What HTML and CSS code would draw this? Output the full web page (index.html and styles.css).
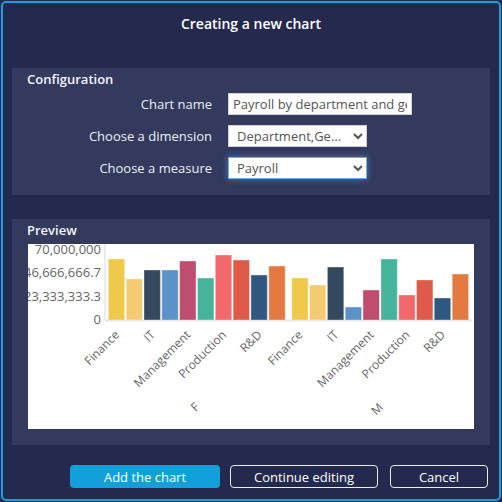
FILE: index.html
```html
<!DOCTYPE html>
<html>
<head>
    <title>Creating a new chart</title>
    <meta charset="utf-8">
    <link rel="stylesheet" href="styles.css">
</head>
<body>
    <div class="dialog">
        <div class="title">Creating a new chart</div>

        <div class="panel config">
            <div class="panel-title">Configuration</div>
            <div class="form">
                <label class="label" for="name">Chart name</label>
                <span class="colon">:</span>
                <input class="field field-wide" type="text" id="name" value="Payroll by department and gender">

                <label class="label" for="dim">Choose a dimension</label>
                <span class="colon">:</span>
                <select class="field" id="dim">
                    <option>Department,Gender</option>
                </select>

                <label class="label" for="measure">Choose a measure</label>
                <span class="colon">:</span>
                <select class="field focused" id="measure">
                    <option>Payroll</option>
                </select>
            </div>
        </div>

        <div class="panel preview">
            <div class="panel-title">Preview</div>
            <div class="chart">
                <svg width="446" height="185">
                    <g class="ylabels">
                        <text x="73" y="9.7">70,000,000</text>
                        <text x="73" y="33.3">46,666,666.7</text>
                        <text x="73" y="57">23,333,333.3</text>
                        <text x="73" y="80">0</text>
                    </g>
                    <line x1="77" y1="0" x2="77" y2="76" stroke="#e6e6e6" stroke-width="1.5"></line>
                    <line x1="77" y1="76.5" x2="444" y2="76.5" stroke="#e6e6e6" stroke-width="2"></line>

                    <g class="bars">
                        <rect x="80.3" y="15" width="16.4" height="61" fill="#efc94c"></rect>
                        <rect x="98.1" y="35" width="16.4" height="41" fill="#f5cb72"></rect>
                        <rect x="116.0" y="26" width="16.4" height="50" fill="#34495e"></rect>
                        <rect x="133.8" y="26" width="16.4" height="50" fill="#5b93c9"></rect>
                        <rect x="151.6" y="17" width="16.4" height="59" fill="#bf4d6d"></rect>
                        <rect x="169.5" y="34" width="16.4" height="42" fill="#46b49d"></rect>
                        <rect x="187.3" y="11" width="16.4" height="65" fill="#f1686d"></rect>
                        <rect x="205.1" y="16" width="16.4" height="60" fill="#e05a48"></rect>
                        <rect x="222.9" y="31" width="16.4" height="45" fill="#30577f"></rect>
                        <rect x="240.8" y="22" width="16.4" height="54" fill="#e47a40"></rect>

                        <rect x="263.7" y="34" width="16.4" height="42" fill="#efc94c"></rect>
                        <rect x="281.5" y="41" width="16.4" height="35" fill="#f5cb72"></rect>
                        <rect x="299.4" y="23" width="16.4" height="53" fill="#34495e"></rect>
                        <rect x="317.2" y="63" width="16.4" height="13" fill="#5b93c9"></rect>
                        <rect x="335.0" y="46" width="16.4" height="30" fill="#bf4d6d"></rect>
                        <rect x="352.9" y="15" width="16.4" height="61" fill="#46b49d"></rect>
                        <rect x="370.7" y="51" width="16.4" height="25" fill="#f1686d"></rect>
                        <rect x="388.5" y="36" width="16.4" height="40" fill="#e05a48"></rect>
                        <rect x="406.3" y="54" width="16.4" height="22" fill="#30577f"></rect>
                        <rect x="424.2" y="30" width="16.4" height="46" fill="#e47a40"></rect>
                    </g>

                    <g class="xlabels">
                        <text x="92" y="91.5" transform="rotate(-45 92 91.5)">Finance</text>
                        <text x="127.7" y="91.5" transform="rotate(-45 127.7 91.5)">IT</text>
                        <text x="163.3" y="91.5" transform="rotate(-45 163.3 91.5)">Management</text>
                        <text x="199" y="91.5" transform="rotate(-45 199 91.5)">Production</text>
                        <text x="234.6" y="91.5" transform="rotate(-45 234.6 91.5)">R&amp;D</text>
                        <text x="275.4" y="91.5" transform="rotate(-45 275.4 91.5)">Finance</text>
                        <text x="311.1" y="91.5" transform="rotate(-45 311.1 91.5)">IT</text>
                        <text x="346.7" y="91.5" transform="rotate(-45 346.7 91.5)">Management</text>
                        <text x="382.4" y="91.5" transform="rotate(-45 382.4 91.5)">Production</text>
                        <text x="418" y="91.5" transform="rotate(-45 418 91.5)">R&amp;D</text>
                    </g>
                    <g class="glabels">
                        <text x="170" y="166" transform="rotate(-45 170 166)">F</text>
                        <text x="352" y="168" transform="rotate(-45 352 168)">M</text>
                    </g>
                </svg>
            </div>
        </div>

        <div class="footer">
            <button class="btn btn-primary">Add the chart</button>
            <button class="btn btn-outline btn-continue">Continue editing</button>
            <button class="btn btn-outline btn-cancel">Cancel</button>
        </div>
    </div>
</body>
</html>
```

FILE: styles.css
```css
*{
    box-sizing: border-box;
}
body{
    margin: 0;
    background-color: #232a4d;
    font-family: "Open Sans", "Noto Sans", sans-serif;
    font-size: 13px;
    color: #eceef4;
}
.dialog{
    margin: 1px;
    width: 500px;
    height: 500px;
    border: 2px solid #1a9fdb;
    border-radius: 5px;
    background-color: #232a4d;
    display: flex;
    flex-direction: column;
}
.title{
    padding-top: 11px;
    line-height: 20px;
    font-size: 14px;
    font-weight: 600;
    text-align: center;
    color: #fff;
}
.panel{
    margin: 0 9px;
    padding: 2px 16px 16px 15px;
    background-color: #333a5e;
}
.config{
    margin-top: 34px;
}
.preview{
    margin-top: 24px;
}
.panel-title{
    line-height: 18px;
    font-weight: 600;
    margin-bottom: 5px;
    color: #f4f5f9;
}
.form{
    display: grid;
    grid-template-columns: 185px 16px auto;
    row-gap: 10px;
    align-items: center;
}
.label{
    text-align: right;
    line-height: 22px;
}
.colon{
    color: #1e4c88;
    padding-left: 3px;
    line-height: 22px;
}
.field{
    height: 22px;
    width: 139px;
    border: 1px solid #d0d0d0;
    border-radius: 0;
    background-color: #fff;
    padding: 0 4px;
    font-family: "Open Sans", "Noto Sans", sans-serif;
    font-size: 13px;
    color: #555;
    outline: none;
}
select.field{
    padding-right: 2px;
    text-overflow: ellipsis;
}
.field-wide{
    width: 184px;
}
.focused{
    border-color: #6aaee8;
    box-shadow: 0 0 6px rgba(102,175,233,.6);
}
.chart{
    margin-left: 1px;
    height: 185px;
    background-color: #fff;
}
.chart svg{
    display: block;
}
.chart text{
    font-family: "Open Sans", "Noto Sans", sans-serif;
    fill: #666;
}
.ylabels text{
    font-size: 13px;
    text-anchor: end;
}
.xlabels text{
    font-size: 12px;
    text-anchor: end;
}
.glabels text{
    font-size: 12px;
    text-anchor: middle;
}
.bars rect{
    stroke: rgba(255,255,255,.35);
    stroke-width: 1;
}
.footer{
    margin-top: 20px;
    padding-right: 11px;
    display: flex;
    justify-content: flex-end;
    gap: 10px;
}
.btn{
    height: 23px;
    border-radius: 4px;
    font-family: "Open Sans", "Noto Sans", sans-serif;
    font-size: 13px;
    color: #fff;
    padding: 0;
}
.btn-primary{
    width: 150px;
    border: none;
    background-color: #139fd9;
}
.btn-outline{
    border: 1px solid #eee;
    background-color: transparent;
}
.btn-continue{
    width: 148px;
}
.btn-cancel{
    width: 98px;
    margin-left: 2px;
}
```
